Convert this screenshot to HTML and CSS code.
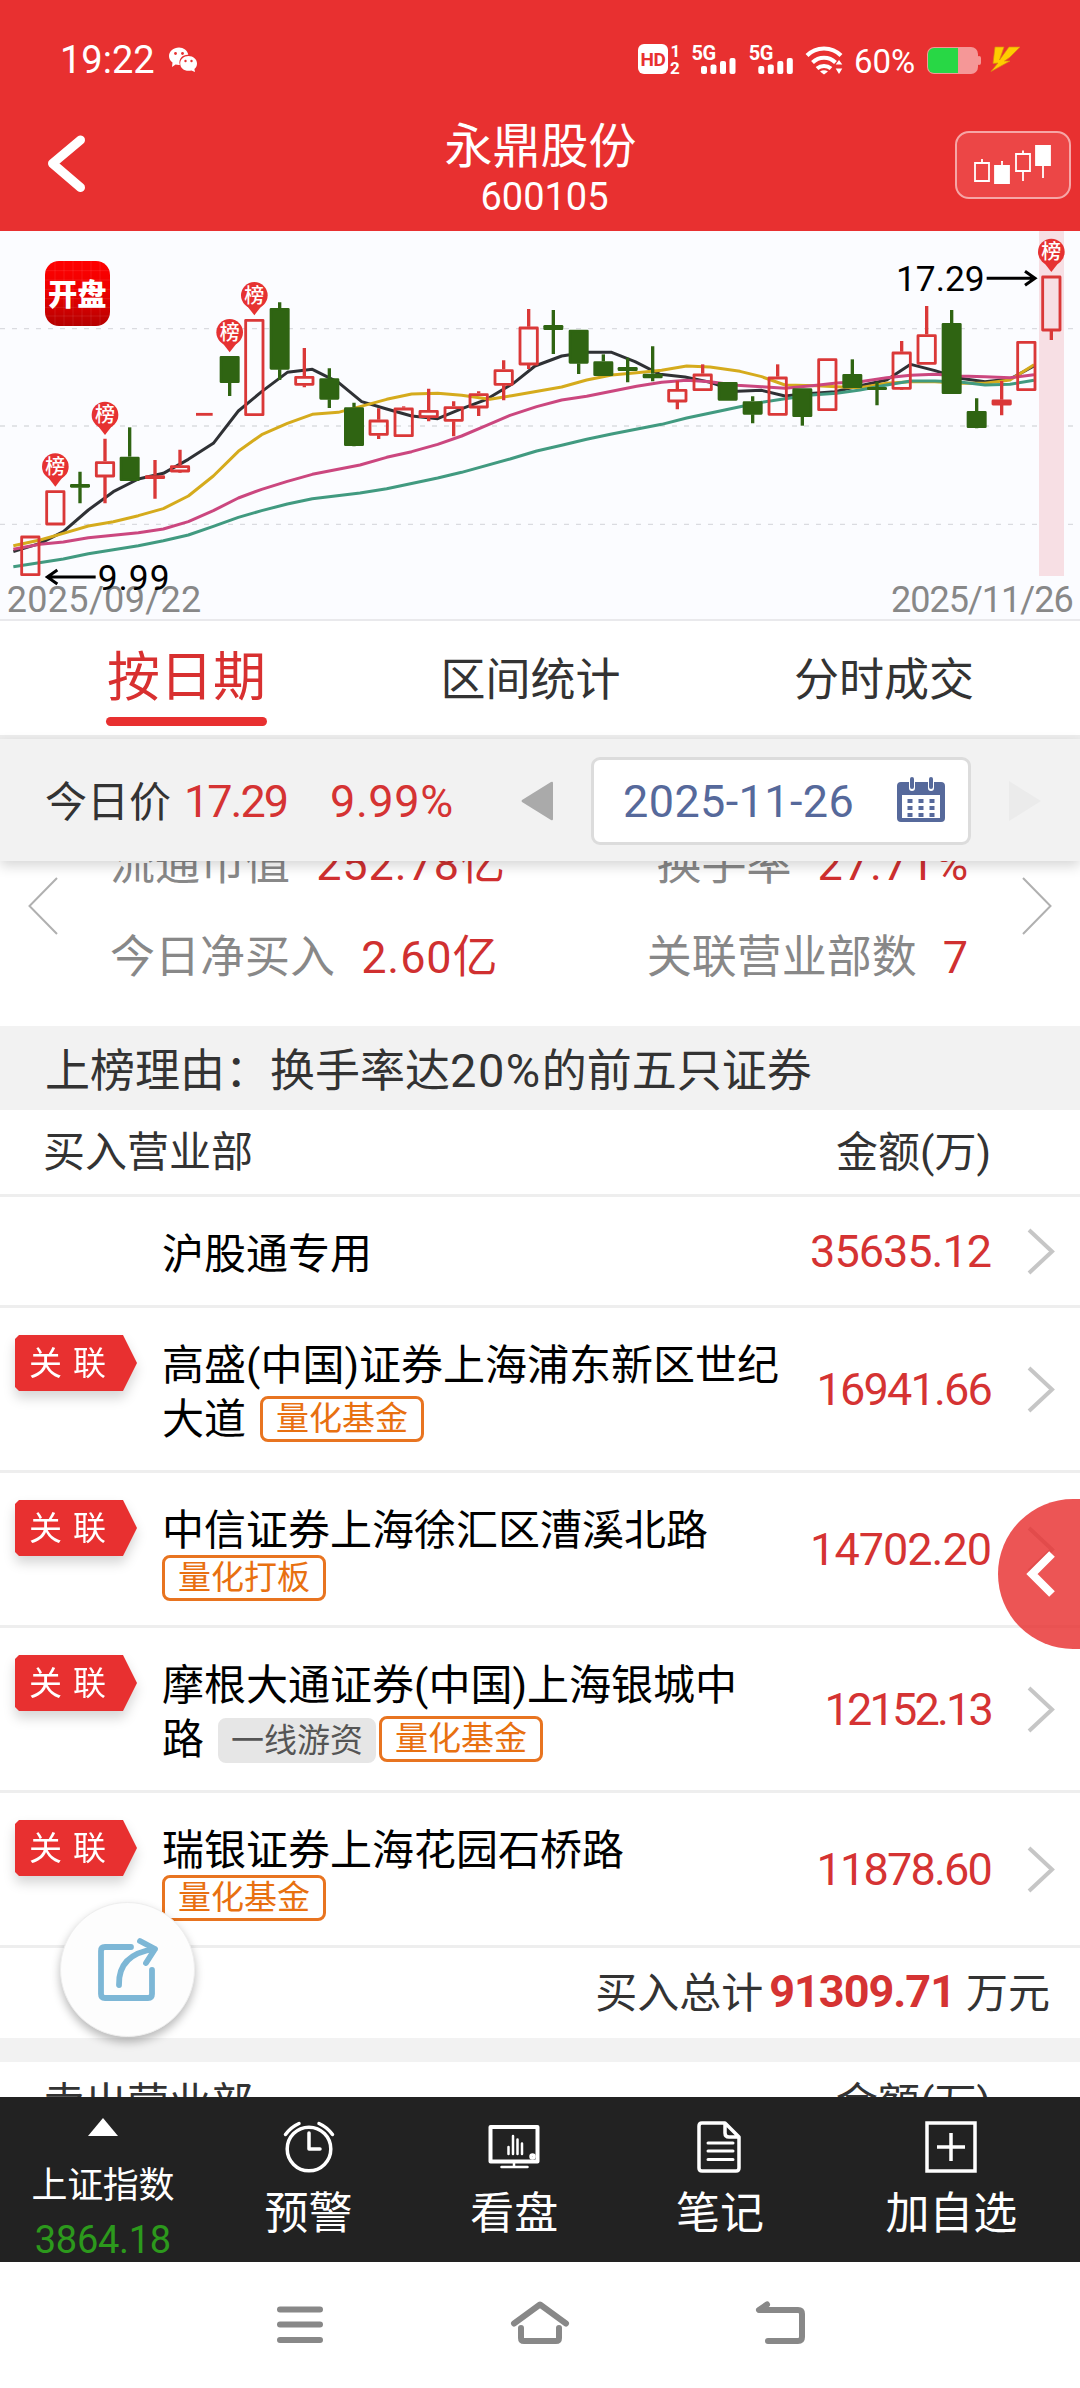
FILE: index.html
```html
<!DOCTYPE html>
<html lang="zh-CN">
<head>
<meta charset="utf-8">
<title>永鼎股份 600105</title>
<link rel="stylesheet" href="styles.css">
</head>
<body>
<header class="top">
  <div class="status">
    <span class="time">19:22</span>
    <svg class="wechat" width="28" height="26" viewBox="0 0 28 26">
      <path fill="#fff" d="M10 .5C4.500.5 0 4.200 0 9c0 2.700 1.400 5 3.500 6.600L3 20l3.600-2.500c1 .300 2.200.5 3.400.5h.8C9 11.500 14 7.500 19.300 7.800 18.500 3.500 14.500.5 10 .5z"/>
      <path fill="#fff" d="M19.500 9c-4.700 0-8.300 3.300-8.300 7.400s3.600 7.400 8.300 7.400c1 0 2-.200 2.900-.400L26 25l-.6-3C27 20.700 28 18.700 28 16.400 28 12.300 24.200 9 19.500 9z"/>
      <g fill="#e73131"><circle cx="6.500" cy="6.500" r="1.400"/><circle cx="13.500" cy="6.500" r="1.400"/><circle cx="16.500" cy="14" r="1.200"/><circle cx="22.500" cy="14" r="1.200"/></g>
    </svg>
    <svg class="indicators" width="386" height="36" viewBox="636 42 386 36">
      <rect x="638" y="44" width="30" height="30" rx="6" fill="#fff"/>
      <text class="hd" x="653" y="66" text-anchor="middle">HD</text>
      <text class="sim" x="675.500" y="57" text-anchor="middle">1</text>
      <text class="sim" x="675" y="74" text-anchor="middle">2</text>
      <g id="signal" fill="#fff">
        <text class="net" x="691.500" y="60">5G</text>
        <rect x="701" y="66" width="6" height="8" rx="2"/><rect x="710.500" y="64.500" width="6" height="9.500" rx="2"/><rect x="720" y="61" width="6" height="13" rx="2"/><rect x="729.500" y="58" width="6" height="16" rx="2"/>
      </g>
      <use href="#signal" x="57.300"/>
      <g fill="none" stroke="#fff" stroke-width="4">
        <path d="M807 55.500C816 46 832 46 841 55.500"/><path d="M812.500 62.500C819 56 829 56 835.500 62.500"/>
        <path d="M817 68.500C821 65 827 65 831 68.500"/>
      </g>
      <path fill="#fff" d="M820 71.500q4-2.500 8 0l-4 3zM839 60l3.300 4.500h-6.600zM839 74l3.300-5.500h-6.600z"/>
      <text class="pct" x="854" y="72.500">60%</text>
      <rect x="927" y="47" width="51" height="27" rx="7" fill="#f59797"/><rect x="977" y="56" width="4" height="9" rx="2" fill="#f59797"/>
      <path fill="#28d745" d="M958 48v25h-24a6 6 0 0 1-6-6V54a6 6 0 0 1 6-6z"/>
      <path fill="#fc0" stroke="#d98b10" stroke-width=".7" d="M995 47h9l-4.500 13 9.500-13h11l-10.500 10.500-5 3.500h5.500l-19 10.500 7-8.500-5 .5z"/>
    </svg>
  </div>
  <div class="titlebar">
    <svg class="back" width="42" height="62" viewBox="0 0 42 62"><path d="M35.500 7 7.500 30.500 35.500 54.500" fill="none" stroke="#fff" stroke-width="9" stroke-linecap="round" stroke-linejoin="round"/></svg>
    <div class="title"><h1>永鼎股份</h1><p>600105</p></div>
    <div class="kbtn">
      <svg width="78" height="42" viewBox="0 0 78 42" fill="none" stroke="#fff" stroke-width="1.800">
        <path d="M1 19h14v18H1zM8 19v-4M42 10h14v17H42zM49 10V6.500M49 27v10M28 18v-1M69 22v12"/><path fill="#fff" d="M21 22h14v17H21zM62 2h14v19H62zM28 21v-4"/>
      </svg>
    </div>
  </div>
</header>

<section class="chart">
  <svg id="kline" width="1080" height="389" viewBox="0 3 3240 1167">
    <defs><linearGradient id="logo" x1="0" y1="0" x2="0" y2="1"><stop offset="0" stop-color="#ff0000"/><stop offset=".45" stop-color="#ee0000"/><stop offset="1" stop-color="#b40000"/></linearGradient></defs>
    <path class="grid" d="M0 296H3240M0 588H3240M0 883H3240"/>
    <rect x="3117" y="3" width="75" height="1035" fill="#f7dfe4"/>
    <g class="ma">
      <polyline stroke="#2f3135" points="40,965 120,940 190,905 265,840 340,785 415,747 490,730 565,688 640,640 715,543 785,485 862,427 937,418 1015,457 1085,515 1160,537 1235,558 1313,566 1380,538 1460,508 1540,460 1605,408 1685,378 1760,367 1835,367 1905,395 1980,433 2055,441 2130,457 2212,484 2285,481 2355,498 2410,492 2505,485 2580,467 2660,450 2732,403 2805,422 2880,445 2955,455 3030,447 3102,408"/>
      <polyline stroke="#d5ab1d" points="40,947 120,930 190,910 265,888 340,875 415,857 490,836 565,798 640,738 715,664 785,614 862,580 937,553 1015,547 1080,530 1160,508 1235,492 1313,490 1385,496 1470,508 1535,497 1685,471 1760,450 1835,435 1910,428 1985,421 2060,408 2130,411 2220,424 2285,440 2355,465 2450,467 2510,470 2580,473 2660,460 2732,455 2805,455 2880,460 2955,460 3030,450 3102,404"/>
      <polyline stroke="#cb477f" points="40,958 120,943 190,936 265,923 340,916 415,908 490,897 565,875 640,842 715,804 785,778 862,754 937,733 1080,705 1160,682 1235,665 1313,643 1385,618 1460,586 1530,556 1610,530 1685,510 1760,499 1835,484 1910,469 1985,457 2060,451 2130,455 2210,466 2285,470 2355,475 2450,466 2510,459 2580,455 2660,443 2732,436 2805,433 2880,438 2955,440 3030,443 3102,434"/>
      <polyline stroke="#419a80" points="40,1010 190,987 265,971 340,959 415,947 490,932 565,915 640,889 715,862 785,842 862,822 937,806 1080,789 1160,776 1313,744 1385,727 1530,687 1610,663 1685,646 1760,628 1835,612 1985,583 2060,564 2160,543 2220,530 2285,517 2355,506 2435,495 2510,490 2580,480 2660,465 2732,453 2805,453 2880,456 2955,465 3030,463 3102,451"/>
    </g>
    <g id="candles"></g>
    <path class="dash" d="M588 553H638"/>
    <rect x="135" y="93" width="195" height="195" rx="42" fill="url(#logo)"/>
    <path d="M165 93V288M192 93V288M219 93V288M246 93V288M273 93V288M300 93V288M135 122H330M135 150H330M135 178H330M135 206H330M135 232H330M135 258H330" stroke="#fff" stroke-opacity=".09" stroke-width="3"/>
    <text class="logo-text" x="232" y="224" text-anchor="middle">开盘</text>
    <text class="date start" x="20" y="1145">2025/09/22</text>
    <text class="date end" x="3218" y="1145" text-anchor="end">2025/11/26</text>
    <g class="arrows"><path d="M287 1041H145M172 1020 142 1041 172 1062"/><path d="M2960 145H3102M3075 124 3105 145 3075 166"/></g>
    <text class="peak low" x="293" y="1080">9.99</text>
    <text class="peak" x="2954" y="183" text-anchor="end">17.29</text>
  </svg>
</section>

<nav class="tabs"><span class="tab active">按日期</span><span class="tab">区间统计</span><span class="tab">分时成交</span></nav>

<section class="daybar">
  <span class="label">今日价</span><span class="price">17.29</span><span class="change">9.99%</span>
  <svg class="prev" width="32" height="40" viewBox="0 0 32 40"><path d="M32 2v36q0 2-2 1L1 21q-1-1 0-2L30 1q2-1 2 1z" fill="#aaa"/></svg>
  <div class="date-input"><span>2025-11-26</span>
    <svg width="48" height="46" viewBox="0 0 48 46"><path fill="#56699b" fill-rule="evenodd" d="M4 5h8v6a3 3 0 0 0 6 0V5h13v6a3 3 0 0 0 6 0V5h7q4 0 4 4v32q0 4-4 4H4q-4 0-4-4V9q0-4 4-4zM5 18v23h38V18z"/><g fill="#56699b"><rect x="13" y="0" width="4" height="12" rx="2"/><rect x="32" y="0" width="4" height="12" rx="2"/></g><path d="M13 22v19M24 22v19M35 22v19" stroke="#56699b" stroke-width="5" stroke-dasharray="4 3"/></svg>
  </div>
  <svg class="next" width="32" height="40" viewBox="0 0 32 40"><path d="M0 0 32 20 0 40z" fill="#ebebeb"/></svg>
</section>

<main class="content">
  <section class="stats">
    <svg width="30" height="58" viewBox="0 0 30 58"><path d="M29 1 1.500 29 29 57"/></svg>
    <div class="stat-grid">
      <div class="stat-row"><p>流通市值 <b>252.78亿</b></p><p>换手率 <b>27.71%</b></p></div>
      <div class="stat-row"><p>今日净买入 <b>2.60亿</b></p><p>关联营业部数 <b>7</b></p></div>
    </div>
    <svg width="30" height="58" viewBox="0 0 30 58"><path d="M1 1 28.500 29 1 57"/></svg>
  </section>
  <section class="reason">上榜理由：换手率达<span>20%</span>的前五只证券</section>
  <div class="thead"><span>买入营业部</span><span>金额(万)</span></div>

  <article class="row first"><div class="flag"></div><div class="name">沪股通专用</div><div class="amount ls1">35635.12</div><svg class="go" width="28" height="47" viewBox="0 0 28 47"><path d="M2 2 25 23.500 2 45"/></svg></article>
  <article class="row tall"><div class="flag"><span>关联</span></div><div class="name">高盛(中国)证券上海浦东新区世纪<br>大道<span class="tag spaced">量化基金</span></div><div class="amount ls2">16941.66</div><svg class="go" width="28" height="47" viewBox="0 0 28 47"><path d="M2 2 25 23.500 2 45"/></svg></article>
  <article class="row mid"><div class="flag"><span>关联</span></div><div class="name">中信证券上海徐汇区漕溪北路<br><span class="tag under">量化打板</span></div><div class="amount ls1">14702.20</div><svg class="go" width="28" height="47" viewBox="0 0 28 47"><path d="M2 2 25 23.500 2 45"/></svg></article>
  <article class="row tall"><div class="flag"><span>关联</span></div><div class="name">摩根大通证券(中国)上海银城中<br>路<span class="tag gray">一线游资</span><span class="tag">量化基金</span></div><div class="amount ls3">12152.13</div><svg class="go" width="28" height="47" viewBox="0 0 28 47"><path d="M2 2 25 23.500 2 45"/></svg></article>
  <article class="row mid"><div class="flag"><span>关联</span></div><div class="name">瑞银证券上海花园石桥路<br><span class="tag under">量化基金</span></div><div class="amount ls2">11878.60</div><svg class="go" width="28" height="47" viewBox="0 0 28 47"><path d="M2 2 25 23.500 2 45"/></svg></article>

  <div class="total"><span>买入总计</span><strong>91309.71</strong><span>万元</span></div>
  <div class="thead sell"><span>卖出营业部</span><span>金额(万)</span></div>
</main>

<footer class="toolbar">
  <div class="tool index"><i></i><span>上证指数</span><em>3864.18</em></div>
  <div class="tool"><svg width="52" height="52" viewBox="0 0 52 52"><circle cx="26" cy="28" r="21.800"/><path d="M26 12v16h11M2.500 13.500Q8 6 16 2.500M49.500 13.500Q44 6 36 2.500"/></svg><span>预警</span></div>
  <div class="tool"><svg width="52" height="52" viewBox="0 0 52 52"><path d="M2.500 6h47v34.500h-47z" stroke-width="4"/><path d="M26 41v4M13.500 46h26M20.500 26v7M25 15v18M29.500 18.500V33M34 22.500V33" stroke-width="2.500"/><circle cx="44.500" cy="35.500" r="1.500"/></svg><span>看盘</span></div>
  <div class="tool"><svg width="52" height="52" viewBox="0 0 52 52"><path d="M8 2h23l14 14v31q0 3-3 3H8q-3 0-3-3V5q0-3 3-3zM31 3v9q0 4 4 4h9"/><path d="M14 22h25M14 30h25M14 38.500h25" stroke-width="3"/></svg><span>笔记</span></div>
  <div class="tool wide"><svg class="plus" width="52" height="52" viewBox="0 0 52 52"><path d="M2 2h48v48H2zM26 12v28M12 26h28"/></svg><span>加自选</span></div>
</footer>

<nav class="sysnav">
  <svg width="60" height="46" viewBox="0 0 60 46"><path d="M10 6.500h40M10 21.500h40M10 37h40"/></svg>
  <svg width="60" height="46" viewBox="0 0 60 46"><path d="M4 20.500 30 1.500 56 20.500M11 25v10q0 3 3 3h32q3 0 3-3V25"/></svg>
  <svg width="60" height="46" viewBox="0 0 60 46"><path d="M17 1.500 9 7H48q4 0 4 4v23q0 4-4 4H18"/></svg>
</nav>

<div class="drawer"><svg width="34" height="50" viewBox="0 0 34 50"><path d="M28 5 8 25 28 45" fill="none" stroke="#fff" stroke-width="8"/></svg></div>
<div class="share"><svg width="64" height="66" viewBox="0 0 64 66"><path d="M33 11H7q-4 0-4 4v43q0 4 4 4h43q4 0 4-4V34M21 49Q20 18 57 13M42 5 57 13 48 27" fill="none" stroke="#7db7d6" stroke-width="5.800" stroke-linecap="round" stroke-linejoin="round"/></svg></div>
<script src="chart.js"></script>
</body>
</html>
```
FILE: styles.css
```css
* { box-sizing: border-box; }
body {
  margin: 0; width: 1080px; height: 2388px; overflow: hidden; position: relative; background: #fff; color: #333;
  font-family: Roboto, "Noto Sans CJK SC", sans-serif; font-size: 42px;
  display: flex; flex-direction: column;
}
h1, p { margin: 0; font-weight: 400; }
svg { display: block; flex: none; overflow: visible; }

.top { height: 231px; background: #e83030; color: #fff; }
.status { height: 106px; padding: 14px 58px 0 60px; display: flex; align-items: center; }
.time { font-size: 38px; line-height: 44px; width: 109px; }
.wechat { margin: 0 0 0 0; }
.indicators { margin-left: auto; }
.indicators text { fill: #fff; }
.indicators .hd { font-size: 19px; font-weight: 700; fill: #e83030; letter-spacing: -.5px; }
.sim { font-size: 17px; font-weight: 700; }
.net { font-size: 20px; font-weight: 700; letter-spacing: -.5px; }
.pct { font-size: 33px; }
.titlebar { height: 125px; display: flex; align-items: center; }
.back { margin: -9px 0 0 45px; }
.title { flex: 1; text-align: center; margin-left: 41px; padding-bottom: 5px; }
.title h1 { font-size: 48px; line-height: 58px; margin-top: 4px; margin-right: 2px; }
.title p { font-size: 38px; line-height: 44px; margin-top: -1px; padding-left: 6px; }
.kbtn { width: 116px; height: 68px; margin: -7px 9px 0 0; border: 2px solid #f6a6a6; border-radius: 14px; background: #ec4646; display: flex; align-items: center; justify-content: center; }

.chart { height: 390px; background: #fbfcff; border-bottom: 2px solid #e9e9ec; }
.chart svg { overflow: hidden; }
.grid { fill: none; stroke: #dadbe0; stroke-width: 4; stroke-dasharray: 15 21; }
.ma { fill: none; stroke-width: 9; stroke-linejoin: round; }
.up, .dash { fill: none; stroke: #da3838; stroke-width: 8.500; }
.up { stroke-linejoin: round; }
.down { fill: #2f6412; stroke: #2f6412; stroke-width: 8; stroke-linejoin: round; }
.wick { stroke-width: 10; }
.pin { fill: #e63232; }
.pin-text { fill: #fff; font-size: 60px; font-weight: 500; }
.logo-text { fill: #fff; font-size: 88px; font-weight: 900; }
.date { fill: #888; font-size: 108px; }
.start { letter-spacing: 1px; }
.end { letter-spacing: -3px; }
.peak { fill: #000; font-size: 106px; }
.low { letter-spacing: 3px; }
.arrows { fill: none; stroke: #000; stroke-width: 9; }

.tabs { height: 118px; padding: 0 106px; display: flex; justify-content: space-between; border-bottom: 4px solid #ededed; }
.tab { font-size: 45px; line-height: 119px; }
.active { font-size: 53px; color: #d83030; line-height: 115px; height: 105px; padding: 0 1px; position: relative; }
.active::after { content: ""; position: absolute; left: 0; right: 0; bottom: 0; height: 9px; border-radius: 5px; background: #e83030; }

.daybar { height: 122px; background: #f2f2f2; display: flex; align-items: center; position: relative; z-index: 2; box-shadow: 0 5px 12px rgba(0,0,0,.16); padding: 2px 0 0 45px; }
.label { width: 139px; margin-top: -6px; }
.price, .change { font-size: 45px; color: #d53333; }
.price { width: 146px; letter-spacing: -2px; }
.change { width: 191px; letter-spacing: .6px; }
.date-input { width: 380px; height: 88px; margin-left: 38px; padding: 0 23px 0 29px; display: flex; align-items: center; justify-content: space-between; background: #fff; border: 3px solid #dcdcdc; border-radius: 9px; font-size: 45px; letter-spacing: .4px; color: #56699b; }
.date-input svg { margin-top: -2px; }
.next { margin-left: 38px; }

.content { height: 1236px; overflow: hidden; }
.stats { height: 165px; padding: 0 28px; display: flex; align-items: center; overflow: hidden; font-size: 45px; color: #888; }
.stats > svg { fill: none; stroke: #b0b0b0; stroke-width: 2; margin-top: -75px; }
.stat-grid { flex: 1; padding: 0 53px 0 52px; margin: -76px 0 -10px; }
.stat-row { display: flex; justify-content: space-between; line-height: 93px; }
.stat-row b { font-weight: 400; color: #d03030; margin-left: 15px; letter-spacing: .9px; }
.reason { height: 84px; line-height: 89px; padding-left: 45px; font-size: 45px; background: #f2f2f2; }
.reason span { font-size: 47px; letter-spacing: 1.500px; }
.thead { height: 87px; padding: 0 89px 0 43px; line-height: 86px; display: flex; justify-content: space-between; border-bottom: 3px solid #eee; }

.row { display: flex; align-items: center; border-bottom: 3px solid #eee; color: #000; }
.first { height: 111px; }
.tall { height: 165px; }
.mid { height: 155px; }
.flag { width: 162px; align-self: stretch; padding: 27px 0 0 15px; filter: drop-shadow(0 7px 6px rgba(0,0,0,.16)); }
.flag span { display: block; width: 122px; height: 56px; padding-left: 14px; line-height: 57px; font-size: 33px; letter-spacing: 11px; color: #fff; background: #e83030; clip-path: polygon(4px 0, 108px 0, 100% 50%, 108px 100%, 4px 100%, 0 calc(100% - 4px), 0 4px); }
.name { width: 618px; line-height: 54px; align-self: flex-start; padding-top: 31px; white-space: nowrap; }
.amount { flex: 1; text-align: right; font-size: 45px; color: #d53333; }
.ls1 { letter-spacing: -1px; }
.ls2 { letter-spacing: -1.800px; }
.ls3 { letter-spacing: -2.800px; }
.go { margin: 0 25px 0 36px; fill: none; stroke: #c6c6c6; stroke-width: 4; }
.tag { display: inline-block; height: 46px; line-height: 39px; padding: 0 13px; border: 3px solid #e87420; border-radius: 8px; font-size: 33px; color: #e87010; vertical-align: 4px; }
.gray { background: #e6e6e6; border-color: #e6e6e6; color: #555; height: 45px; padding: 0 10px; margin: 0 3px 0 14px; vertical-align: 2px; }
.spaced { margin-left: 14px; }
.under { margin-top: -3px; vertical-align: top; }

.total { height: 114px; padding: 0 30px 4px 0; display: flex; align-items: center; justify-content: flex-end; border-bottom: 24px solid #f2f2f2; }
.total span { margin-top: -4px; }
.total strong { font-size: 45px; letter-spacing: -1px; color: #d53333; margin: 0 11px 0 6px; }
.sell { line-height: 83px; }

.toolbar { height: 165px; background: #222; color: #fff; display: flex; }
.tool { width: 205.700px; display: flex; flex-direction: column; align-items: center; padding-top: 24px; font-size: 44px; line-height: 60px; }
.tool svg { fill: none; stroke: #fff; stroke-width: 3.500; stroke-linecap: round; stroke-linejoin: round; }
.tool .plus { stroke-linecap: butt; stroke-linejoin: miter; }
.tool span { margin-top: 11px; }
.wide { flex: 1; }
.index { font-size: 36px; padding-top: 21px; }
.index i { border: 15px solid transparent; border-top: 0; border-bottom: 18px solid #fff; }
.index span { line-height: 48px; margin-top: 26px; letter-spacing: -.3px; }
.index em { font-style: normal; font-size: 38px; line-height: 44px; color: #2c991c; margin-top: 8px; letter-spacing: -.300px; }

.sysnav { flex: 1; display: flex; justify-content: center; gap: 180px; padding-top: 41px; }
.sysnav svg { fill: none; stroke: #888; stroke-width: 6; stroke-linecap: round; stroke-linejoin: round; }

.drawer { position: absolute; right: 0; top: 1499px; width: 82px; height: 150px; border-radius: 75px 0 0 75px; background: rgba(232,48,48,.82); z-index: 3; display: flex; align-items: center; padding-left: 26px; }
.share { position: absolute; left: 60px; top: 1902px; width: 135px; height: 135px; border-radius: 50%; background: #fdfdfd; border: 1px solid #eee; box-shadow: 0 5px 10px rgba(0,0,0,.28); z-index: 3; display: flex; align-items: center; justify-content: center; padding: 0 0 2px 4px; }
```
FILE: chart.js
```js
// Candles: [centre x, body top, body bottom, wick top, wick bottom, rising, has pin]
const candles = [
  [91,917,1037,917,1037,1], [166,781,885,781,885,1,1], [240,762,772,725,820,0], [315,694,741,626,820,1,1],
  [389,680,752,592,752,0], [465,736,746,690,806,1], [540,706,726,659,728,1], [689,378,458,378,498,0,1],
  [763,267,557,267,557,1,1], [839,234,418,217,450,0], [913,438,466,354,472,1], [988,445,508,415,534,0],
  [1062,532,647,518,649,0], [1136,569,616,535,627,1], [1211,533,620,529,620,1], [1286,540,563,476,574,1],
  [1361,529,574,514,619,1], [1436,490,534,484,558,1], [1511,418,466,391,511,1], [1586,290,405,237,417,1],
  [1660,285,299,240,372,0], [1736,299,400,299,432,0], [1810,394,437,373,437,0], [1883,411,422,383,457,0],
  [1958,431,444,349,454,0], [2032,477,516,452,538,1], [2108,431,482,403,482,1], [2183,456,511,456,511,0],
  [2258,514,553,499,580,0], [2333,440,556,403,556,1], [2407,475,560,475,587,0], [2482,385,542,385,542,1],
  [2557,432,473,388,473,0], [2631,471,479,455,526,0], [2705,365,478,333,480,1], [2780,313,403,228,403,1],
  [2855,279,491,240,491,0], [2930,543,593,505,595,0], [3005,509,525,453,556,1], [3079,333,482,333,482,1],
  [3154,137,303,137,330,1,1]
];
let out = '';
for (const [x, top, bottom, high, low, rising, pin] of candles) {
  const cls = rising ? 'up' : 'down';
  const height = Math.max(bottom - top - 7, 1);
  out += `<path class="${cls} wick" d="M${x} ${high}V${top}M${x} ${bottom}V${low}"/>`;
  out += `<rect class="${cls}" x="${x - 26}" y="${top + 4}" width="52" height="${height}"/>`;
  if (pin) {
    const y = (high < top ? high : top) - 71;
    out += `<circle class="pin" cx="${x}" cy="${y}" r="40"/><path class="pin" d="M${x - 24} ${y + 29}L${x} ${y + 60}L${x + 24} ${y + 29}z"/>`;
    out += `<text class="pin-text" x="${x}" y="${y + 22}" text-anchor="middle">榜</text>`;
  }
}
document.getElementById('candles').innerHTML = out;
```
